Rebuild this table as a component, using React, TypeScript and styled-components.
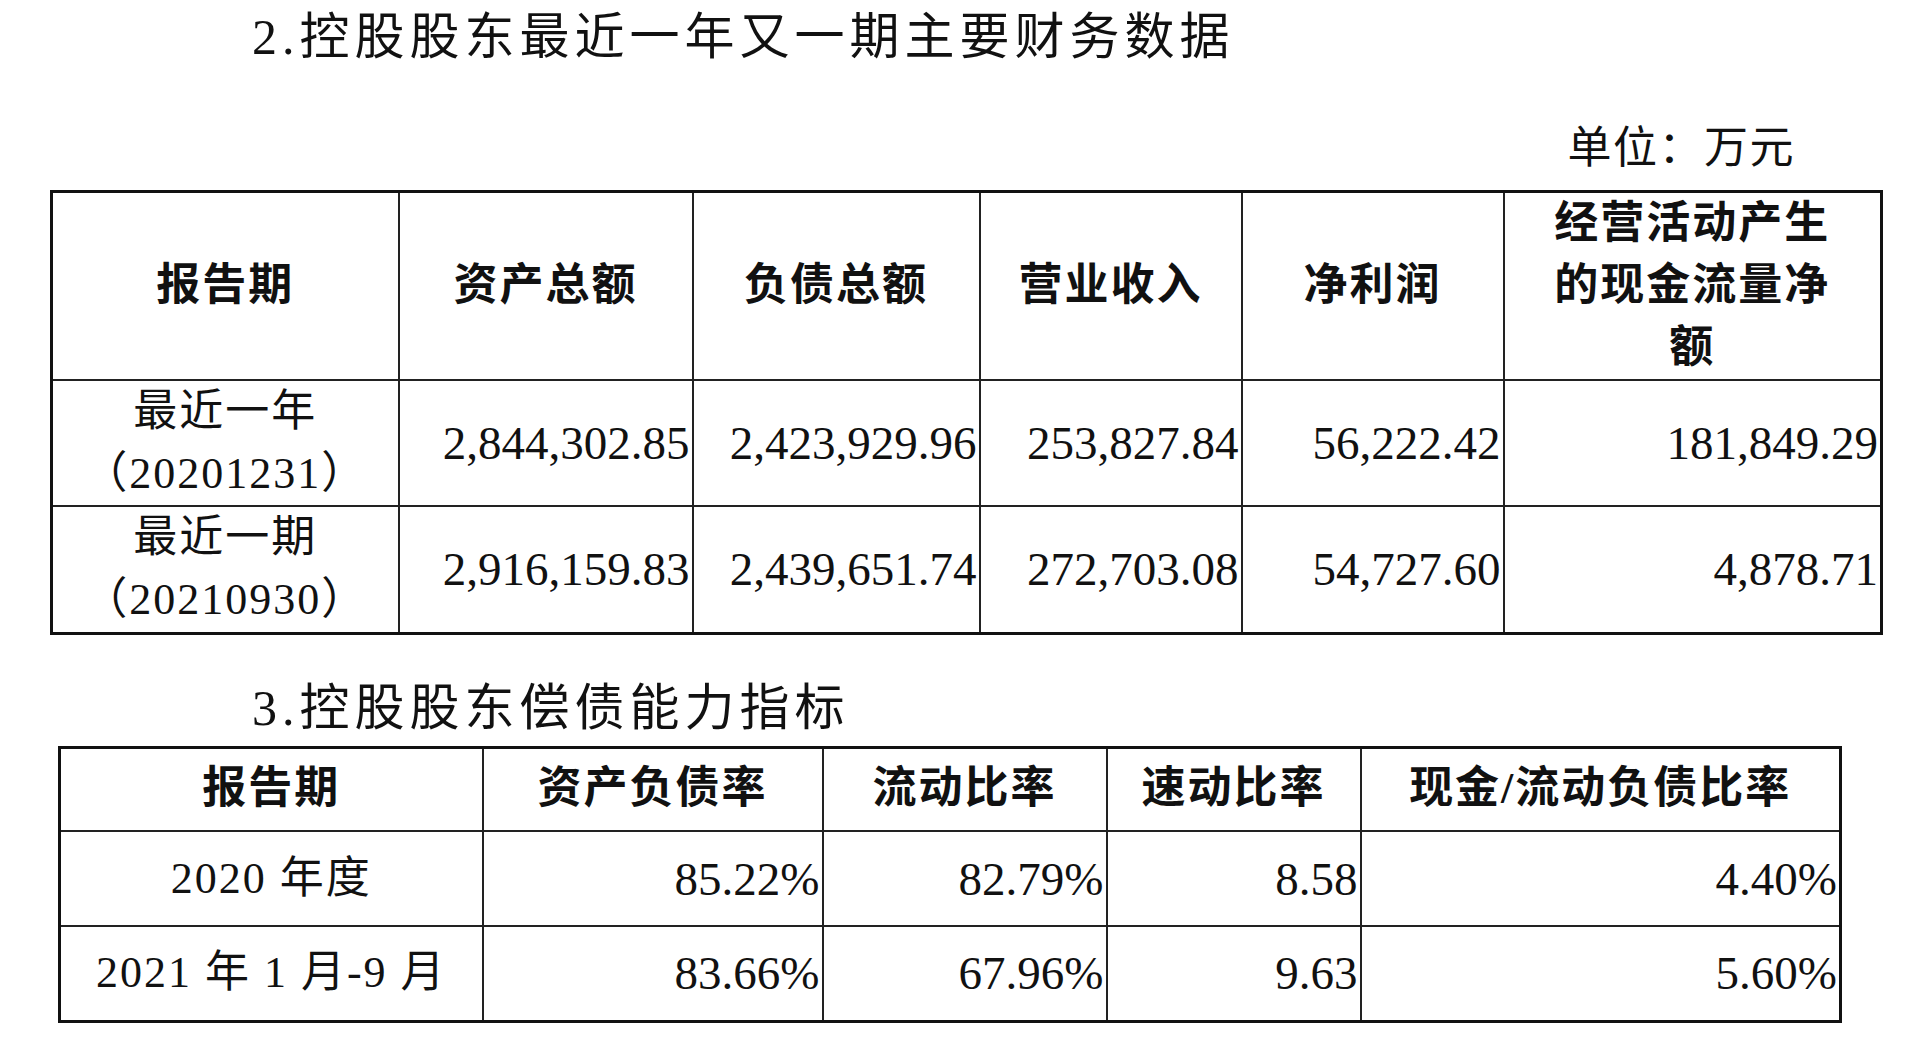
import React from 'react';
import styled, { createGlobalStyle } from 'styled-components';

const GlobalStyle = createGlobalStyle`
  html, body {
    margin: 0;
    padding: 0;
    background: #fff;
  }
  body {
    font-family: 'Liberation Serif', 'Noto Sans CJK SC', serif;
    color: #111;
  }
`;

const Page = styled.div`
  width: 1928px;
  height: 1062px;
  overflow: hidden;
  background: #fff;
`;

const Title = styled.h2<{ $top: number }>`
  margin: ${props => props.$top}px 0 0;
  padding-left: 252px;
  font-size: 50px;
  font-weight: 400;
  line-height: 74px;
  letter-spacing: 5px;
`;

const Unit = styled.div`
  margin-top: 45px;
  padding-right: 133px;
  text-align: right;
  font-size: 44px;
  line-height: 60px;
  letter-spacing: 1.5px;
`;

const Table = styled.table<{ $left: number; $width: number; $top: number }>`
  margin: ${props => props.$top}px 0 0 ${props => props.$left}px;
  width: ${props => props.$width}px;
  border-collapse: collapse;
  table-layout: fixed;
  border: 3px solid #111;
`;

const Col = styled.col<{ $w: number }>`
  width: ${props => props.$w}px;
`;

const Row = styled.tr<{ $h: number }>`
  height: ${props => props.$h}px;
`;

const HeadCell = styled.th`
  border: 2px solid #222;
  padding: 0;
  text-align: center;
  vertical-align: middle;
  font-size: 44px;
  font-weight: 700;
  line-height: 62px;
  letter-spacing: 2px;
  white-space: nowrap;
`;

const Cell = styled.td<{ $num?: boolean }>`
  border: 2px solid #222;
  padding: 0 ${props => (props.$num ? '2px' : '0')} 0 0;
  text-align: ${props => (props.$num ? 'right' : 'center')};
  vertical-align: middle;
  font-size: ${props => (props.$num ? 47 : 44)}px;
  font-weight: 400;
  line-height: 62px;
  letter-spacing: ${props => (props.$num ? 0 : 2)}px;
  white-space: nowrap;
`;

// 主要财务数据
const finHead = ['报告期', '资产总额', '负债总额', '营业收入', '净利润'];
const finRows = [
  {
    label: ['最近一年', '（20201231）'],
    values: ['2,844,302.85', '2,423,929.96', '253,827.84', '56,222.42', '181,849.29'],
  },
  {
    label: ['最近一期', '（20210930）'],
    values: ['2,916,159.83', '2,439,651.74', '272,703.08', '54,727.60', '4,878.71'],
  },
];

// 偿债能力指标
const ratioHead = ['报告期', '资产负债率', '流动比率', '速动比率', '现金/流动负债比率'];
const ratioRows = [
  ['2020 年度', '85.22%', '82.79%', '8.58', '4.40%'],
  ['2021 年 1 月-9 月', '83.66%', '67.96%', '9.63', '5.60%'],
];

const App: React.FC = () => {
  return (
    <Page>
      <GlobalStyle />
      <Title $top={0}>2.控股股东最近一年又一期主要财务数据</Title>
      <Unit>单位：万元</Unit>

      <Table $left={50} $width={1830} $top={11}>
        <colgroup>
          {[347, 294, 287, 262, 262, 378].map((w, i) => (
            <Col key={i} $w={w} />
          ))}
        </colgroup>
        <tbody>
          <Row $h={188}>
            {finHead.map(h => (
              <HeadCell key={h}>{h}</HeadCell>
            ))}
            <HeadCell>
              经营活动产生
              <br />
              的现金流量净
              <br />
              额
            </HeadCell>
          </Row>
          {finRows.map((r, i) => (
            <Row key={i} $h={i === 0 ? 124 : 127}>
              <Cell>
                {r.label[0]}
                <br />
                {r.label[1]}
              </Cell>
              {r.values.map((v, j) => (
                <Cell key={j} $num>
                  {v}
                </Cell>
              ))}
            </Row>
          ))}
        </tbody>
      </Table>

      <Title $top={36}>3.控股股东偿债能力指标</Title>

      <Table $left={58} $width={1781} $top={1}>
        <colgroup>
          {[423, 340, 284, 254, 480].map((w, i) => (
            <Col key={i} $w={w} />
          ))}
        </colgroup>
        <tbody>
          <Row $h={84}>
            {ratioHead.map(h => (
              <HeadCell key={h}>{h}</HeadCell>
            ))}
          </Row>
          {ratioRows.map((r, i) => (
            <Row key={i} $h={95}>
              <Cell>{r[0]}</Cell>
              {r.slice(1).map((v, j) => (
                <Cell key={j} $num>
                  {v}
                </Cell>
              ))}
            </Row>
          ))}
        </tbody>
      </Table>
    </Page>
  );
};

export default App;
